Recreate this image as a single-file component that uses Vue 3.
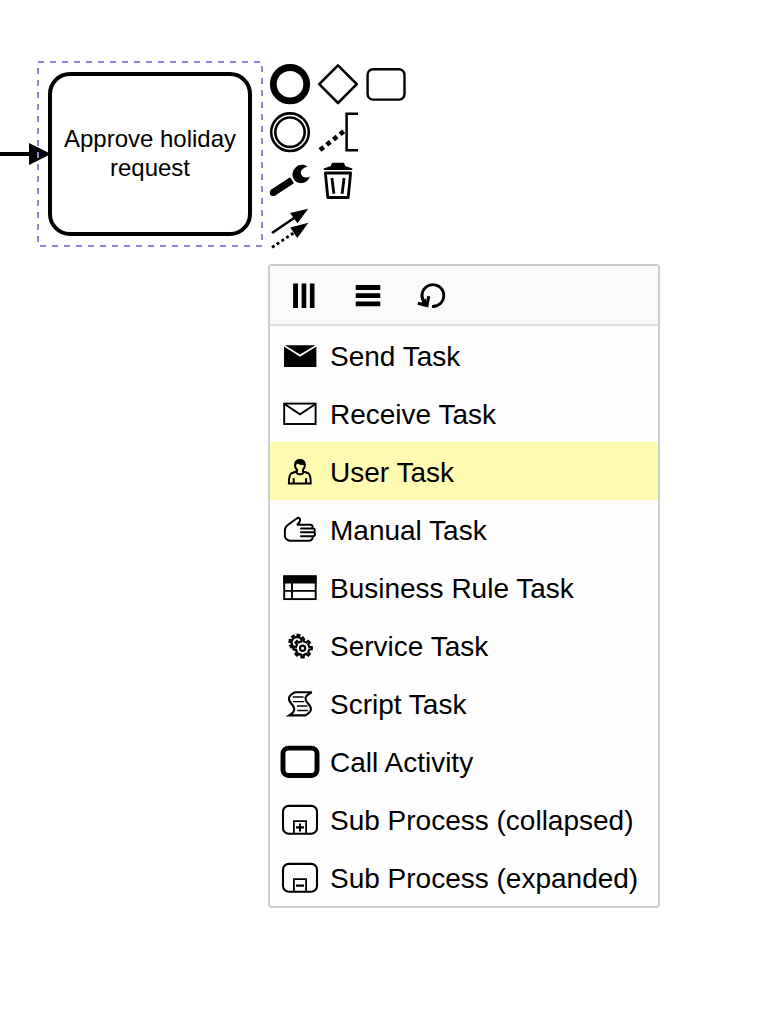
<script setup>
const gear = (cx, cy, outer, inner, teeth, turn) => {
  const points = []
  const step = (Math.PI * 2) / teeth
  for (let i = 0; i < teeth; i++) {
    const a = i * step + turn
    for (const [offset, r] of [[-0.24, inner], [-0.15, outer], [0.15, outer], [0.24, inner]]) {
      const t = a + offset * step
      points.push(`${(cx + r * Math.cos(t)).toFixed(2)},${(cy + r * Math.sin(t)).toFixed(2)}`)
    }
  }
  return points.join(' ')
}
const smallGear = gear(17, 17.4, 7.6, 5.4, 8, 0.2)
const largeGear = gear(22.6, 23.2, 9.2, 6.8, 8, 0)

const tasks = [
  { icon: 'send', label: 'Send Task' },
  { icon: 'receive', label: 'Receive Task' },
  { icon: 'user', label: 'User Task', active: true },
  { icon: 'manual', label: 'Manual Task' },
  { icon: 'rule', label: 'Business Rule Task' },
  { icon: 'service', label: 'Service Task' },
  { icon: 'script', label: 'Script Task' },
  { icon: 'call', label: 'Call Activity' },
  { icon: 'collapsed', label: 'Sub Process (collapsed)' },
  { icon: 'expanded', label: 'Sub Process (expanded)' },
]
</script>

<template>
  <main class="canvas">
    <section class="diagram">
      <div class="shape"><span>Approve holiday<br />request</span></div>
      <svg class="overlay" viewBox="0 0 266 260">
        <path d="M0 154H32" class="flow" />
        <path d="M29 143L51 154L29 165Z" />
        <path d="M38 62H262V246H38" class="selection" />
        <path d="M38 68V246" class="selection" />
      </svg>
    </section>

    <aside class="side">
      <nav class="pad">
        <div class="pad-row">
          <svg viewBox="0 0 48 48"><circle cx="24" cy="24.2" r="16.7" class="line" stroke-width="6.8" /></svg>
          <svg viewBox="0 0 48 48"><path d="M24 5.4L42.8 24.2L24 43L5.2 24.2Z" class="line" stroke-width="2.6" stroke-linejoin="round" /></svg>
          <svg viewBox="0 0 48 48"><rect x="5.6" y="9.2" width="36.9" height="30.4" rx="5.5" class="line" stroke-width="2.4" /></svg>
        </div>
        <div class="pad-row">
          <svg viewBox="0 0 48 48"><circle cx="24" cy="24.2" r="18.8" class="line" stroke-width="2.6" /><circle cx="24" cy="24.2" r="14.7" class="line" stroke-width="2.6" /></svg>
          <svg viewBox="0 0 48 48"><path d="M44 5.8H32.6V42.2H44" class="line" stroke-width="2.5" /><path d="M6 42L30.5 22.8" class="line" stroke-width="4.7" stroke-dasharray="4.7 3.8" /></svg>
        </div>
        <div class="pad-row">
          <svg viewBox="0 0 48 48">
            <path d="M6.5 37L26 24.3" class="line" stroke-width="7.2" />
            <circle cx="7" cy="36.8" r="3.2" />
            <path d="M41.3 10.7C38.5 8.2 33 8 29.6 11.4C26.4 14.7 25.6 18.6 27.3 22.2C29 25.7 32.3 27.4 36 27.1C39.8 26.7 43 24.4 43.8 20.6C40.8 22.2 36.3 21.7 35 18C34 14.8 37 11.7 41.3 10.7Z" />
          </svg>
          <svg viewBox="0 0 48 48">
            <path d="M9.7 14V12.5L16.8 10L18 6.8H30L31.2 10L38.3 12.5V14Z" />
            <path d="M11.4 17H36.6L34.2 41.5H13.8Z" class="line" stroke-width="2.8" stroke-linejoin="round" />
            <path d="M17.9 22L19.9 37.8M30.1 22L28.1 37.8" class="line" stroke-width="2.8" />
          </svg>
        </div>
        <div class="pad-row">
          <svg viewBox="0 0 48 48">
            <path d="M6 29L31 12" class="line" stroke-width="2.6" />
            <path d="M42.2 4.7L24 9L31.5 19.2Z" />
            <path d="M6 43.4L29 28" class="line" stroke-width="2.8" stroke-dasharray="3 2.7" />
            <path d="M42.4 18.7L24.2 23.6L31.3 34Z" />
          </svg>
        </div>
      </nav>

      <section class="menu">
        <header class="menu-head">
          <svg viewBox="0 0 40 40"><path d="M9.1 7.5h4.9v24.6H9.1zM17.6 7.5h4.7v24.6h-4.7zM25.9 7.5h4.6v24.6h-4.6z" /></svg>
          <svg viewBox="0 0 40 40"><path d="M7.7 9.1h24.6v5H7.7zM7.7 17.3h24.6v4.8H7.7zM7.7 25.4h24.6v4.9H7.7z" /></svg>
          <svg viewBox="0 0 40 40"><path d="M20 30.4A10.9 10.9 0 1 0 11 24.2L13.2 28.5" class="line" stroke-width="2.9" /><path d="M5.8 27.2L15 29.6L16.7 20.2" class="line" stroke-width="3.1" /><path d="M10.5 24.5L13.6 22.5L16 29.5L9 28.5Z" /></svg>
        </header>
        <ul class="menu-list">
          <li v-for="task in tasks" :key="task.label" class="entry" :class="{ active: task.active }">
            <svg viewBox="0 0 40 40">
              <g v-if="task.icon === 'send'">
                <path d="M4 11.6L20 21.8L36.4 11.6V32H4Z" />
                <path d="M5 10.2H35.4L20 19.6Z" />
              </g>
              <g v-else-if="task.icon === 'receive'" class="line" stroke-width="1.9">
                <rect x="4.2" y="10.6" width="31.4" height="20.4" />
                <path d="M4.5 11L20 21.4L35.5 11" />
              </g>
              <g v-else-if="task.icon === 'user'" class="line" stroke-width="2">
                <path d="M16.9 18.4C14 15.8 14.2 9.3 19.9 9.1C25.8 9.1 25.8 15.8 23 18.4V20.3L28.1 22.2C30.5 23.6 30.8 27 30.7 32.4H8.9C8.8 27 9.3 23.6 11.7 22.2L16.9 20.2ZM16.4 20.5C16.6 24.3 23.4 24.3 23.6 20.5M13.7 32V27.3M26.1 32V27.3" />
                <path d="M14.8 14C14.9 10 17 8.4 19.9 8.4C23.2 8.4 25 10.6 25 14C21.6 14.2 19 13.4 17.5 12.4C17 13.3 16 13.8 14.8 14Z" class="solid" />
              </g>
              <g v-else-if="task.icon === 'manual'" class="line" stroke-width="2" stroke-linejoin="round" stroke-linecap="round">
                <path d="M21 19.5H33.4C35.2 19.5 35.2 23.3 33.4 23.3H21M33.6 23.3C35.6 23.4 35.6 27.2 33 27.2H21M32.4 27.2C33.2 28.2 32.4 31.5 29.5 31.7H10C7.3 31.7 4.9 29.5 4.9 27.2V21C4.9 19 5.6 17.6 7.8 16L17 9.3C19.3 8 21 10.4 19.6 12.8L17.5 15.7H30.5C32.5 15.7 33.3 17.5 32 19.3" />
              </g>
              <g v-else-if="task.icon === 'rule'" class="line" stroke-width="1.9">
                <rect x="4.2" y="9.3" width="31.5" height="22.8" />
                <path d="M4 23.9H36M12 16V32" />
                <path d="M3.3 8.4H36.6V16.6H3.3Z" class="solid" />
              </g>
              <g v-else-if="task.icon === 'service'" class="line" stroke-width="2.2">
                <polygon :points="smallGear" />
                <polygon :points="largeGear" class="front" />
                <circle cx="22.6" cy="23.2" r="2.6" />
              </g>
              <g v-else-if="task.icon === 'script'" class="line">
                <path d="M31.8 9.2H15.2C8 12.5 7.5 16.3 11.2 20.5C15.5 25.3 15.6 28.5 9.2 32.4H25.4C31.8 29 32.5 25.5 28.3 20.8C24 16 24.3 13 31.8 9.2Z" stroke-width="2.1" />
                <path d="M12.8 14H23.5M12.8 18.6H24.3M17 23H27.5M17.3 27.5H28" stroke-width="1.3" />
              </g>
              <rect v-else-if="task.icon === 'call'" x="3" y="7.1" width="34" height="27.4" rx="5.5" class="line" stroke-width="4.9" />
              <g v-else class="line" stroke-width="2.1">
                <rect x="3" y="6.9" width="34" height="27.8" rx="5.8" />
                <path d="M13.9 34.5V22.2H26.1V34.5" stroke-width="1.8" />
                <path v-if="task.icon === 'collapsed'" d="M16 28.4H24M20 24.4V32.4" />
                <path v-else d="M16 28.6H24" />
              </g>
            </svg>
            <span>{{ task.label }}</span>
          </li>
        </ul>
      </section>
    </aside>
  </main>
</template>

<style>
body { background: #fff; }
</style>

<style scoped>
.canvas {
  display: flex;
  width: 784px;
  height: 1010px;
  overflow: hidden;
  background: #fff;
  color: #000;
  font-family: "Liberation Sans", Arial, sans-serif;
}
svg { display: block; flex: none; }
.line { fill: none; stroke: #000; }
.solid { fill: #000; stroke: none; }
.front { fill: #fefefe; }
.diagram {
  position: relative;
  box-sizing: border-box;
  width: 266px;
  padding: 72px 0 0 48px;
}
.shape {
  display: flex;
  box-sizing: border-box;
  width: 204px;
  height: 164px;
  align-items: center;
  justify-content: center;
  border: 4px solid #000;
  border-radius: 22px;
  font-size: 24px;
  line-height: 29px;
  text-align: center;
}
.shape span { padding-bottom: 2px; }
.overlay {
  position: absolute;
  top: 0;
  left: 0;
  width: 266px;
  height: 260px;
}
.flow { stroke: #000; stroke-width: 4; }
.selection { fill: none; stroke: #8888dd; stroke-width: 2; stroke-dasharray: 6 6; }
.side { padding-top: 60px; }
.pad { height: 204px; }
.pad-row { display: flex; }
.pad-row svg { width: 48px; height: 48px; }
.menu {
  box-sizing: border-box;
  width: 392px;
  margin-left: 2px;
  border: 2px solid #ccc;
  border-radius: 4px;
  overflow: hidden;
  background: #fefefe;
}
.menu-head {
  display: flex;
  gap: 24px;
  align-items: center;
  height: 58px;
  padding-left: 14px;
  border-bottom: 2px solid #ddd;
  background: #fafafa;
}
.menu-head svg, .entry svg { width: 40px; height: 40px; }
.menu-head svg { margin-top: 2px; }
.menu-list { margin: 0; padding: 0; list-style: none; }
.entry {
  display: flex;
  gap: 10px;
  align-items: center;
  height: 58px;
  padding-left: 10px;
  font-size: 28px;
  line-height: 32px;
  white-space: nowrap;
}
.entry span { padding-top: 4px; }
.active { background: #fffbb0; }
</style>
